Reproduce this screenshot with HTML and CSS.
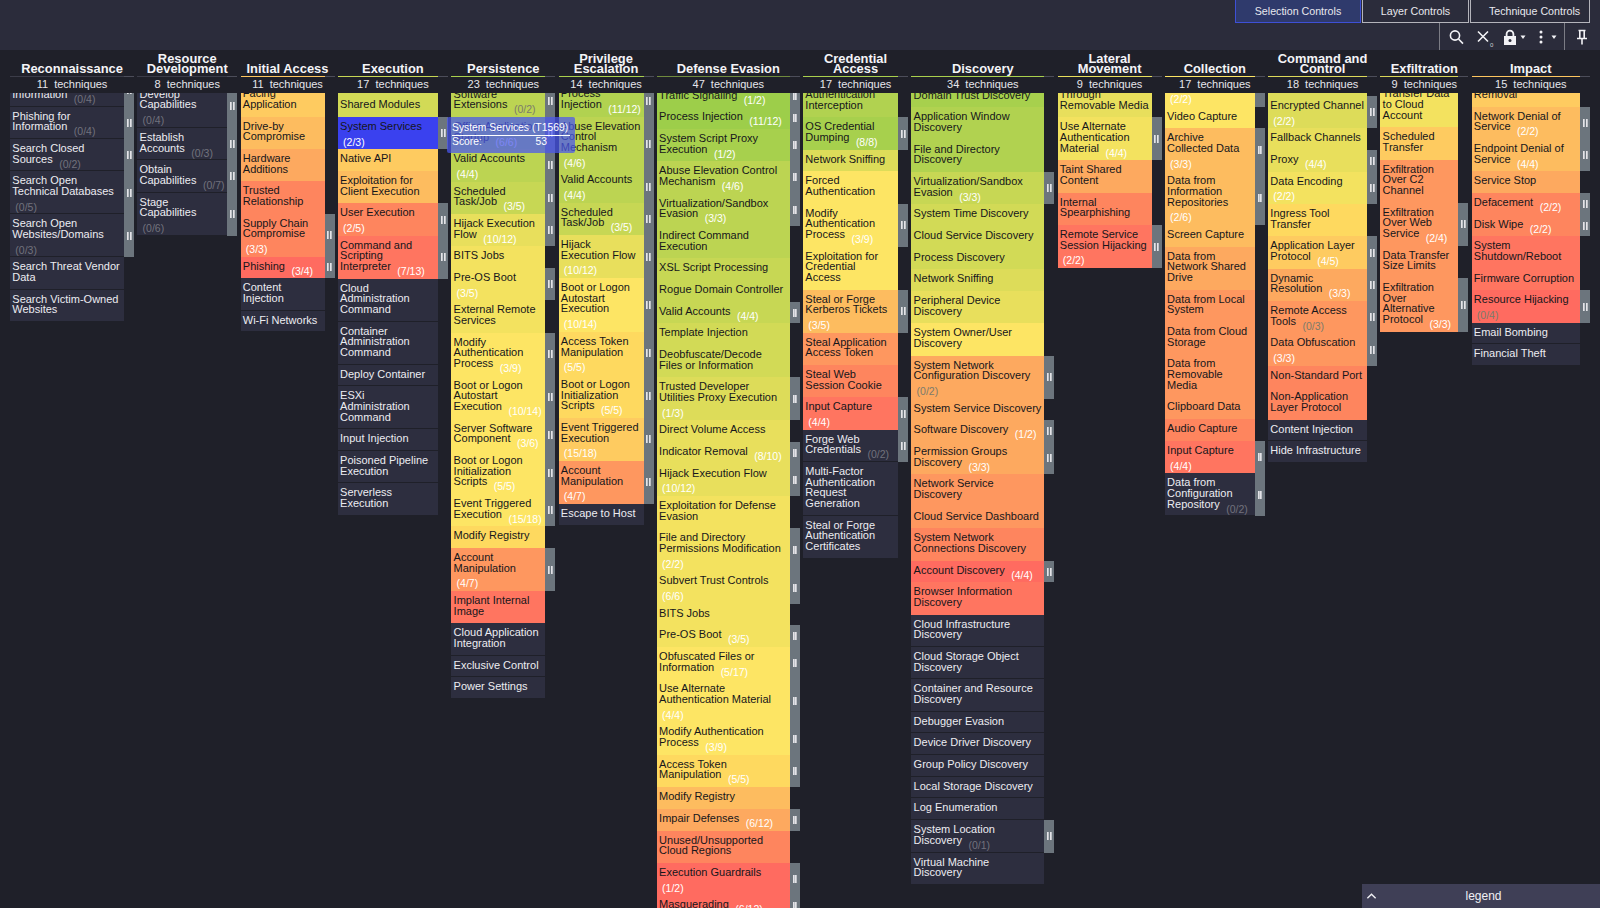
FILE: index.html
```html
<!DOCTYPE html>
<html lang="en">
<head>
<meta charset="utf-8">
<title>ATT&amp;CK Navigator</title>
<link rel="stylesheet" href="styles.css">
</head>
<body>
<header class="topbar">
  <nav class="tabs">
    <button class="tab on">Selection Controls</button>
    <button class="tab">Layer Controls</button>
    <button class="tab">Technique Controls</button>
  </nav>
  <div class="tools">
    <div class="toolgroup">
      <svg class="ic" viewBox="0 0 16 16"><circle cx="7" cy="6.5" r="4.6"/><path d="M10.5 10 15 14.6"/></svg>
      <span class="tool"><svg class="ic" viewBox="0 0 16 16"><path d="M3 2.5 13 12.5M13 2.5 3 12.5"/></svg><span class="badge">0</span></span>
      <span class="tool"><svg class="ic" viewBox="0 0 16 16"><path class="fill" d="M2 7h12v9.400H2z"/><path class="thick" d="M4.600 7V5a3.400 3.400 0 0 1 6.800 0v2"/><circle class="hole" cx="8" cy="11.500" r="1.500"/></svg><svg class="caret" viewBox="0 0 6 6"><path d="M.5 1.500h5L3 5z"/></svg></span>
      <span class="tool"><svg class="ic" viewBox="0 0 16 16"><circle class="fill" cx="8" cy="3" r="1.500"/><circle class="fill" cx="8" cy="8" r="1.500"/><circle class="fill" cx="8" cy="13" r="1.500"/></svg><svg class="caret" viewBox="0 0 6 6"><path d="M.5 1.500h5L3 5z"/></svg></span>
    </div>
    <svg class="ic pin" viewBox="0 0 16 16"><path d="M4.500 1.500h7M5.800 1.500v7.300M10.200 1.500v7.300M3 9.500h10M8 9.500V15.500"/></svg>
  </div>
</header>
<main class="matrix">

<section class="col re"><div class="head"><h2>Reconnaissance</h2><div class="line"></div><p>11  techniques</p></div><div class="list">
<div class="t x s">Gather Victim Org<br>Information<i>(0/4)</i></div>
<div class="t x s">Phishing for<br>Information<i>(0/4)</i></div>
<div class="t x s">Search Closed<br>Sources<i>(0/2)</i></div>
<div class="t x s">Search Open<br>Technical Databases<br><i class="n">(0/5)</i></div>
<div class="t x s">Search Open<br>Websites/Domains<br><i class="n">(0/3)</i></div>
<div class="t x">Search Threat Vendor<br>Data</div>
<div class="t x">Search Victim-Owned<br>Websites</div>
</div></section>

<section class="col rd"><div class="head"><h2>Resource<br>Development</h2><div class="line"></div><p>8  techniques</p></div><div class="list">
<div class="t x s">Develop<br>Capabilities<br><i class="n">(0/4)</i></div>
<div class="t x s">Establish<br>Accounts<i>(0/3)</i></div>
<div class="t x s">Obtain<br>Capabilities<i>(0/7)</i></div>
<div class="t x s">Stage<br>Capabilities<br><i class="n">(0/6)</i></div>
</div></section>

<section class="col ia"><div class="head"><h2>Initial Access</h2><div class="line"></div><p>11  techniques</p></div><div class="list">
<div class="t c12">Exploit Public-<br>Facing<br>Application</div>
<div class="t c13">Drive-by<br>Compromise</div>
<div class="t c14">Hardware<br>Additions</div>
<div class="t c16">Trusted<br>Relationship</div>
<div class="t c16 s">Supply Chain<br>Compromise<br><i class="n">(3/3)</i></div>
<div class="t c18 s">Phishing<i>(3/4)</i></div>
<div class="t x">Content<br>Injection</div>
<div class="t x">Wi-Fi Networks</div>
</div></section>

<section class="col ex"><div class="head"><h2>Execution</h2><div class="line"></div><p>17  techniques</p></div><div class="list">
<div class="t c6">Software Deployment<br>Tools</div>
<div class="t c6">Shared Modules</div>
<div class="t sel s">System Services<br><i class="n">(2/3)</i></div>
<div class="t c12">Native API</div>
<div class="t c13">Exploitation for<br>Client Execution</div>
<div class="t c16 s">User Execution<br><i class="n">(2/5)</i></div>
<div class="t c17 s">Command and<br>Scripting<br>Interpreter<i>(7/13)</i></div>
<div class="t x">Cloud<br>Administration<br>Command</div>
<div class="t x">Container<br>Administration<br>Command</div>
<div class="t x">Deploy Container</div>
<div class="t x">ESXi<br>Administration<br>Command</div>
<div class="t x">Input Injection</div>
<div class="t x">Poisoned Pipeline<br>Execution</div>
<div class="t x">Serverless<br>Execution</div>
</div></section>

<section class="col pe"><div class="head"><h2>Persistence</h2><div class="line"></div><p>23  techniques</p></div><div class="list">
<div class="t c4 s">Software<br>Extensions<em>(0/2)</em></div>
<div class="t c3 s">Office Application<br>Startup<i>(6/6)</i></div>
<div class="t c4 s">Valid Accounts<br><i class="n">(4/4)</i></div>
<div class="t c5 s">Scheduled<br>Task/Job<i>(3/5)</i></div>
<div class="t c8 s">Hijack Execution<br>Flow<i>(10/12)</i></div>
<div class="t c9">BITS Jobs</div>
<div class="t c9 s">Pre-OS Boot<br><i class="n">(3/5)</i></div>
<div class="t c9">External Remote<br>Services</div>
<div class="t c10 s">Modify<br>Authentication<br>Process<i>(3/9)</i></div>
<div class="t c10 s">Boot or Logon<br>Autostart<br>Execution<i>(10/14)</i></div>
<div class="t c10 s">Server Software<br>Component<i>(3/6)</i></div>
<div class="t c10 s">Boot or Logon<br>Initialization<br>Scripts<i>(5/5)</i></div>
<div class="t c10 s">Event Triggered<br>Execution<i>(15/18)</i></div>
<div class="t c11">Modify Registry</div>
<div class="t c15 s">Account<br>Manipulation<br><i class="n">(4/7)</i></div>
<div class="t c17">Implant Internal<br>Image</div>
<div class="t x">Cloud Application<br>Integration</div>
<div class="t x">Exclusive Control</div>
<div class="t x">Power Settings</div>
</div></section>

<section class="col pr"><div class="head"><h2>Privilege<br>Escalation</h2><div class="line"></div><p>14  techniques</p></div><div class="list">
<div class="t c3 s">Process<br>Injection<i>(11/12)</i></div>
<div class="t c4 s">Abuse Elevation<br>Control<br>Mechanism<br><i class="n">(4/6)</i></div>
<div class="t c4 s">Valid Accounts<br><i class="n">(4/4)</i></div>
<div class="t c5 s">Scheduled<br>Task/Job<i>(3/5)</i></div>
<div class="t c8 s">Hijack<br>Execution Flow<br><i class="n">(10/12)</i></div>
<div class="t c10 s">Boot or Logon<br>Autostart<br>Execution<br><i class="n">(10/14)</i></div>
<div class="t c11 s">Access Token<br>Manipulation<br><i class="n">(5/5)</i></div>
<div class="t c11 s">Boot or Logon<br>Initialization<br>Scripts<i>(5/5)</i></div>
<div class="t c12 s">Event Triggered<br>Execution<br><i class="n">(15/18)</i></div>
<div class="t c15 s">Account<br>Manipulation<br><i class="n">(4/7)</i></div>
<div class="t x">Escape to Host</div>
</div></section>

<section class="col de"><div class="head"><h2>Defense Evasion</h2><div class="line"></div><p>47  techniques</p></div><div class="list">
<div class="t c1 s">Traffic Signaling<i>(1/2)</i></div>
<div class="t c1 s">Process Injection<i>(11/12)</i></div>
<div class="t c2 s">System Script Proxy<br>Execution<i>(1/2)</i></div>
<div class="t c4 s">Abuse Elevation Control<br>Mechanism<i>(4/6)</i></div>
<div class="t c4 s">Virtualization/Sandbox<br>Evasion<i>(3/3)</i></div>
<div class="t c4">Indirect Command<br>Execution</div>
<div class="t c5">XSL Script Processing</div>
<div class="t c5">Rogue Domain Controller</div>
<div class="t c5 s">Valid Accounts<i>(4/4)</i></div>
<div class="t c6">Template Injection</div>
<div class="t c6">Deobfuscate/Decode<br>Files or Information</div>
<div class="t c7 s">Trusted Developer<br>Utilities Proxy Execution<br><i class="n">(1/3)</i></div>
<div class="t c8">Direct Volume Access</div>
<div class="t c8 s">Indicator Removal<i>(8/10)</i></div>
<div class="t c8 s">Hijack Execution Flow<br><i class="n">(10/12)</i></div>
<div class="t c9">Exploitation for Defense<br>Evasion</div>
<div class="t c9 s">File and Directory<br>Permissions Modification<br><i class="n">(2/2)</i></div>
<div class="t c9 s">Subvert Trust Controls<br><i class="n">(6/6)</i></div>
<div class="t c9">BITS Jobs</div>
<div class="t c9 s">Pre-OS Boot<i>(3/5)</i></div>
<div class="t c10 s">Obfuscated Files or<br>Information<i>(5/17)</i></div>
<div class="t c10 s">Use Alternate<br>Authentication Material<br><i class="n">(4/4)</i></div>
<div class="t c10 s">Modify Authentication<br>Process<i>(3/9)</i></div>
<div class="t c11 s">Access Token<br>Manipulation<i>(5/5)</i></div>
<div class="t c13">Modify Registry</div>
<div class="t c14 s">Impair Defenses<i>(6/12)</i></div>
<div class="t c16">Unused/Unsupported<br>Cloud Regions</div>
<div class="t c18 s">Execution Guardrails<br><i class="n">(1/2)</i></div>
<div class="t c18 s">Masquerading<i>(6/12)</i></div>
</div></section>

<section class="col ca"><div class="head"><h2>Credential<br>Access</h2><div class="line"></div><p>17  techniques</p></div><div class="list">
<div class="t c3">Multi-Factor<br>Authentication<br>Interception</div>
<div class="t c2 s">OS Credential<br>Dumping<i>(8/8)</i></div>
<div class="t c7">Network Sniffing</div>
<div class="t c10">Forced<br>Authentication</div>
<div class="t c10 s">Modify<br>Authentication<br>Process<i>(3/9)</i></div>
<div class="t c10">Exploitation for<br>Credential<br>Access</div>
<div class="t c13 s">Steal or Forge<br>Kerberos Tickets<br><i class="n">(3/5)</i></div>
<div class="t c15">Steal Application<br>Access Token</div>
<div class="t c16">Steal Web<br>Session Cookie</div>
<div class="t c17 s">Input Capture<br><i class="n">(4/4)</i></div>
<div class="t x s">Forge Web<br>Credentials<i>(0/2)</i></div>
<div class="t x">Multi-Factor<br>Authentication<br>Request<br>Generation</div>
<div class="t x">Steal or Forge<br>Authentication<br>Certificates</div>
</div></section>

<section class="col di"><div class="head"><h2>Discovery</h2><div class="line"></div><p>34  techniques</p></div><div class="list">
<div class="t c2">Domain Trust Discovery</div>
<div class="t c3">Application Window<br>Discovery</div>
<div class="t c3">File and Directory<br>Discovery</div>
<div class="t c5 s">Virtualization/Sandbox<br>Evasion<i>(3/3)</i></div>
<div class="t c6">System Time Discovery</div>
<div class="t c6">Cloud Service Discovery</div>
<div class="t c6">Process Discovery</div>
<div class="t c7">Network Sniffing</div>
<div class="t c8">Peripheral Device<br>Discovery</div>
<div class="t c10">System Owner/User<br>Discovery</div>
<div class="t c14 s">System Network<br>Configuration Discovery<br><em class="n">(0/2)</em></div>
<div class="t c14">System Service Discovery</div>
<div class="t c14 s">Software Discovery<i>(1/2)</i></div>
<div class="t c14 s">Permission Groups<br>Discovery<i>(3/3)</i></div>
<div class="t c15">Network Service<br>Discovery</div>
<div class="t c15">Cloud Service Dashboard</div>
<div class="t c16">System Network<br>Connections Discovery</div>
<div class="t c18 s">Account Discovery<i>(4/4)</i></div>
<div class="t c17">Browser Information<br>Discovery</div>
<div class="t x">Cloud Infrastructure<br>Discovery</div>
<div class="t x">Cloud Storage Object<br>Discovery</div>
<div class="t x">Container and Resource<br>Discovery</div>
<div class="t x">Debugger Evasion</div>
<div class="t x">Device Driver Discovery</div>
<div class="t x">Group Policy Discovery</div>
<div class="t x">Local Storage Discovery</div>
<div class="t x">Log Enumeration</div>
<div class="t x s">System Location<br>Discovery<i>(0/1)</i></div>
<div class="t x">Virtual Machine<br>Discovery</div>
</div></section>

<section class="col lm"><div class="head"><h2>Lateral<br>Movement</h2><div class="line"></div><p>9  techniques</p></div><div class="list">
<div class="t c8">Replication<br>Through<br>Removable Media</div>
<div class="t c9 s">Use Alternate<br>Authentication<br>Material<i>(4/4)</i></div>
<div class="t c14">Taint Shared<br>Content</div>
<div class="t c16">Internal<br>Spearphishing</div>
<div class="t c17 s">Remote Service<br>Session Hijacking<br><i class="n">(2/2)</i></div>
</div></section>

<section class="col co"><div class="head"><h2>Collection</h2><div class="line"></div><p>17  techniques</p></div><div class="list">
<div class="t c10 s">Adversary-in-the-<br>Middle<br><i class="n">(2/2)</i></div>
<div class="t c10">Video Capture</div>
<div class="t c13 s">Archive<br>Collected Data<br><i class="n">(3/3)</i></div>
<div class="t c13 s">Data from<br>Information<br>Repositories<br><i class="n">(2/6)</i></div>
<div class="t c13">Screen Capture</div>
<div class="t c14">Data from<br>Network Shared<br>Drive</div>
<div class="t c15">Data from Local<br>System</div>
<div class="t c15">Data from Cloud<br>Storage</div>
<div class="t c15">Data from<br>Removable<br>Media</div>
<div class="t c15">Clipboard Data</div>
<div class="t c16">Audio Capture</div>
<div class="t c17 s">Input Capture<br><i class="n">(4/4)</i></div>
<div class="t x s">Data from<br>Configuration<br>Repository<i>(0/2)</i></div>
</div></section>

<section class="col cc"><div class="head"><h2>Command and<br>Control</h2><div class="line"></div><p>18  techniques</p></div><div class="list">
<div class="t c7">Multi-Stage Channels</div>
<div class="t c7 s">Encrypted Channel<br><i class="n">(2/2)</i></div>
<div class="t c8">Fallback Channels</div>
<div class="t c8 s">Proxy<i>(4/4)</i></div>
<div class="t c9 s">Data Encoding<br><i class="n">(2/2)</i></div>
<div class="t c11">Ingress Tool<br>Transfer</div>
<div class="t c12 s">Application Layer<br>Protocol<i>(4/5)</i></div>
<div class="t c14 s">Dynamic<br>Resolution<i>(3/3)</i></div>
<div class="t c15 s">Remote Access<br>Tools<em>(0/3)</em></div>
<div class="t c15 s">Data Obfuscation<br><i class="n">(3/3)</i></div>
<div class="t c16">Non-Standard Port</div>
<div class="t c16">Non-Application<br>Layer Protocol</div>
<div class="t x">Content Injection</div>
<div class="t x">Hide Infrastructure</div>
</div></section>

<section class="col xf"><div class="head"><h2>Exfiltration</h2><div class="line"></div><p>9  techniques</p></div><div class="list">
<div class="t c9">Transfer Data<br>to Cloud<br>Account</div>
<div class="t c12">Scheduled<br>Transfer</div>
<div class="t c15">Exfiltration<br>Over C2<br>Channel</div>
<div class="t c15 s">Exfiltration<br>Over Web<br>Service<i>(2/4)</i></div>
<div class="t c15">Data Transfer<br>Size Limits</div>
<div class="t c15 s">Exfiltration<br>Over<br>Alternative<br>Protocol<i>(3/3)</i></div>
</div></section>

<section class="col im"><div class="head"><h2>Impact</h2><div class="line"></div><p>15  techniques</p></div><div class="list">
<div class="t c12">Account Access<br>Removal</div>
<div class="t c13 s">Network Denial of<br>Service<i>(2/2)</i></div>
<div class="t c13 s">Endpoint Denial of<br>Service<i>(4/4)</i></div>
<div class="t c14">Service Stop</div>
<div class="t c16 s">Defacement<i>(2/2)</i></div>
<div class="t c16 s">Disk Wipe<i>(2/2)</i></div>
<div class="t c17">System<br>Shutdown/Reboot</div>
<div class="t c17">Firmware Corruption</div>
<div class="t c18 s">Resource Hijacking<br><em class="n">(0/4)</em></div>
<div class="t x">Email Bombing</div>
<div class="t x">Financial Theft</div>
</div></section>

</main>
<aside class="tip">
  <div class="tip-name">System Services (T1569)</div>
  <div class="tip-score"><span>Score:</span><span>53</span></div>
</aside>
<footer class="legend">
  <svg class="chev" viewBox="0 0 12 8"><path d="M1.500 6.500 6 2l4.500 4.500"/></svg>
  <span>legend</span>
</footer>
</body>
</html>
```
FILE: styles.css
```css
* { box-sizing: border-box; }
html, body { margin: 0; height: 100%; }
body {
  width: 1600px;
  height: 908px;
  position: relative;
  overflow: hidden;
  display: flex;
  flex-direction: column;
  background: #1f2029;
  color: #ececf1;
  font-family: "Liberation Sans", Arial, sans-serif;
  font-size: 11px;
  line-height: 10.67px;
}

/* top bar */
.topbar {
  height: 50px;
  flex: none;
  background: #2b2c3b;
  padding-right: 10px;
  display: flex;
  flex-direction: column;
  align-items: flex-end;
}
.tabs { display: flex; height: 23px; }
.tab {
  height: 23px;
  margin: 0;
  padding: 0;
  background: #2b2c3b;
  border: 1px solid #b4b4bb;
  border-top: 0;
  color: #e8e8ee;
  font: 10.67px/1 "Liberation Sans", Arial, sans-serif;
  width: 107px;
}
.tab + .tab { margin-left: 1px; }
.tab:last-child { width: 120px; padding-left: 9px; }
.tab.on {
  width: 126px;
  background: #2f3a6c;
  border-color: #3e50d6;
}
.tools { flex: 1; display: flex; align-items: center; }
.toolgroup {
  display: flex;
  align-items: center;
  gap: 11px;
  height: 27px;
  padding: 0 7px 0 8px;
  border-left: 1.5px solid #7b7c85;
  border-right: 1.5px solid #7b7c85;
}
.tool { position: relative; display: flex; align-items: center; gap: 2px; }
.tool + .tool + .tool { margin-left: -4px; }
.tool:nth-child(3) { margin-left: 0; }
.ic { width: 16px; height: 16px; fill: none; stroke: #f2f2f6; stroke-width: 1.600; display: block; }
.ic .fill { fill: #f2f2f6; stroke: none; }
.ic .thick { stroke-width: 1.800; }
.ic .hole { fill: #2b2c3b; stroke: none; }
.caret { width: 6px; height: 6px; fill: #f2f2f6; }
.badge {
  position: absolute;
  left: 15px;
  top: 13px;
  font-size: 6px;
  line-height: 6px;
  color: #cfcfd6;
}
.pin { margin-left: 9px; }

/* matrix */
.matrix {
  flex: 1;
  min-height: 0;
  display: grid;
  grid-template-columns: 124px 100px 94px 110.300px 104px 95px 143px 105px 143px 104px 100px 109px 88px 118.500px;
  gap: 3.250px;
  padding-left: 10px;
}
.col { display: flex; flex-direction: column; min-width: 0; min-height: 0; }
.head {
  height: 43px;
  flex: none;
  display: flex;
  flex-direction: column;
  justify-content: flex-end;
  text-align: center;
}
.head h2 {
  margin: 0 0 1px;
  font-size: 12.900px;
  line-height: 10.67px;
  font-weight: 700;
  color: #f4f4f7;
  white-space: nowrap;
}
.line {
  height: 1px;
  flex: none;
  background: linear-gradient(to right, var(--u) calc(100% - 10px), #4c4d59 0);
}
.head p {
  margin: 0;
  height: 16px;
  line-height: 15px;
  white-space: pre;
  color: #e6e6ec;
}
.list { flex: 1; min-height: 0; overflow: hidden; }
.t:first-child { margin-top: var(--o); }

/* tactic offsets (scroll position of each column) and underline colours */
.re { --o: -18.8px;  --u: #3b3c48; }
.rd { --o: -8.2px;   --u: #3b3c48; }
.ia { --o: -19.5px;  --u: #fec65f; }
.ex { --o: -30px;    --u: #c7d754; }
.pe { --o: -8.4px;   --u: #a9d04d; }
.pr { --o: -8.6px;   --u: #a9d04d; }
.de { --o: -7.4px;   --u: #6f8a3d; }
.ca { --o: -18.7px;  --u: #a9d04d; }
.di { --o: -7.4px;   --u: #a9d04d; }
.lm { --o: -18.7px;  --u: #e8df5c; }
.co { --o: -29.3px;  --u: #fde564; }
.cc { --o: -18.7px;  --u: #ddd95a; }
.xf { --o: -8.7px;   --u: #d8d558; }
.im { --o: -18.6px;  --u: #fec65f; }

/* technique rows */
.t {
  position: relative;
  margin-right: 10px;
  padding: 4px 0 6px 2.300px;
  border-bottom: 1px solid transparent;
  white-space: nowrap;
  color: #16161b;
}
.t i, .t em {
  font-style: normal;
  font-size: 10.5px;
  line-height: 0;
  vertical-align: -5px;
  margin-left: 6.500px;
  color: #fff;
}
.t .n { margin-left: 3px; }
.t em { color: #7b7b6c; }
.x { background: #2d2e3f; border-bottom-color: #1f2029; color: #ececf1; }
.t.x i { color: #72727d; }
.sel { background: #3a41ef; }
.s::after {
  content: "";
  position: absolute;
  left: 100%;
  top: 0;
  bottom: -1px;
  width: 10px;
  background:
    linear-gradient(#e4e4e8, #e4e4e8) 2.800px 50% / 1.700px 8px no-repeat,
    linear-gradient(#e4e4e8, #e4e4e8) 5.600px 50% / 1.700px 8px no-repeat,
    #6c757d;
}
.c1 { background: #9dce4a; }
.c2 { background: #a7d04d; }
.c3 { background: #b1d250; }
.c4 { background: #bcd452; }
.c5 { background: #c7d754; }
.c6 { background: #d2da56; }
.c7 { background: #dddc59; }
.c8 { background: #e8df5c; }
.c9 { background: #f3e25f; }
.c10 { background: #fde564; }
.c11 { background: #fed95f; }
.c12 { background: #fecb60; }
.c13 { background: #fdbc5f; }
.c14 { background: #fda95f; }
.c15 { background: #fe975f; }
.c16 { background: #fe855e; }
.c17 { background: #ff7560; }
.c18 { background: #ff6b60; }

/* tooltip over the matrix */
.tip {
  position: absolute;
  left: 447px;
  top: 117px;
  width: 128px;
  height: 36px;
  padding: 5.500px 5px 0;
  background: rgba(74, 86, 240, 0.72);
  border-radius: 2px;
  color: #fff;
  font-size: 10.35px;
}
.tip-name { padding-bottom: 1.500px; border-bottom: 1px solid #fff; white-space: nowrap; }
.tip-score { display: flex; justify-content: space-between; padding: 1px 23px 0 0; }

/* legend */
.legend {
  position: absolute;
  right: 0;
  bottom: 0;
  width: 238px;
  height: 24px;
  padding-left: 5px;
  background: #3f3f56;
  display: flex;
  align-items: center;
  justify-content: center;
  font-size: 12px;
  color: #f0f0f4;
}
.chev {
  position: absolute;
  left: 4px;
  top: 8px;
  width: 11px;
  height: 8px;
  fill: none;
  stroke: #f0f0f4;
  stroke-width: 1.500;
}
```
